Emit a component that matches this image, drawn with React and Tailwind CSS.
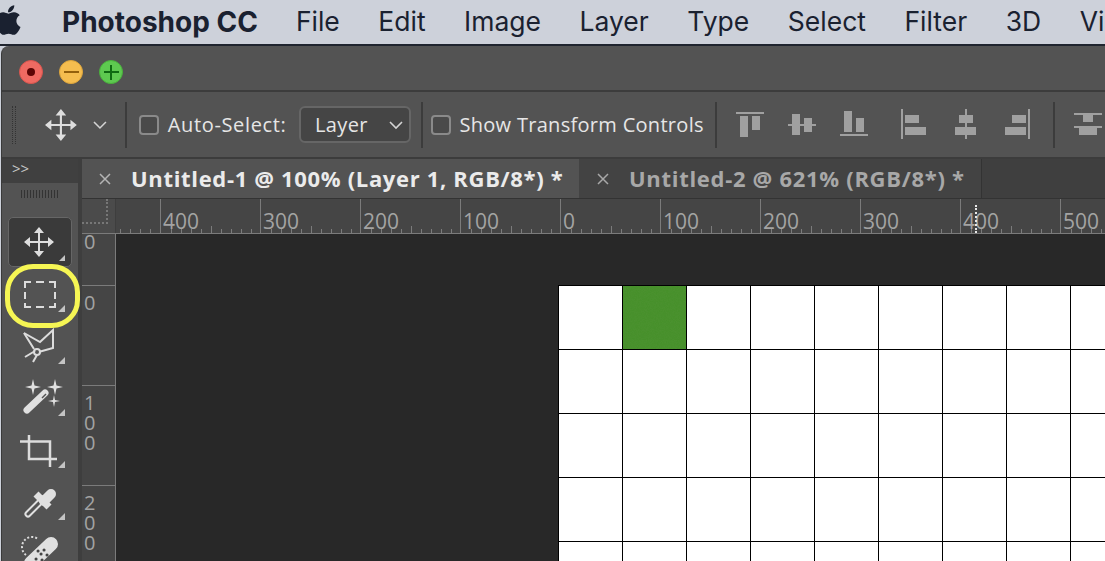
import { FaApple } from "react-icons/fa";

const menus = ["File", "Edit", "Image", "Layer", "Type", "Select", "Filter", "3D", "Vi"];
const hLabels = [400, 300, 200, 100, 0, 100, 200, 300, 400, 500];
const vLabels = [["0"], ["1", "0", "0"], ["2", "0", "0"]];

function Tool({ y, children }) {
  return (
    <svg className="block shrink-0 w-[76px] h-[52px]" viewBox={`2 ${y} 76 52`}>
      {children}
      <polygon points={`58,${y + 45} 65,${y + 45} 65,${y + 38}`} fill="#c4c4c4" />
    </svg>
  );
}

function Check() {
  return <div className="w-[20px] h-[20px] rounded-[4px] border-2 border-[#8a8a8a] bg-[#4a4a4a] shrink-0" />;
}

function Ticks() {
  return (
    <svg className="absolute left-0 bottom-0 w-[100px] h-[8px]" viewBox="0 0 100 8">
      {[10, 20, 30, 40, 50, 60, 70, 80, 90].map((x) => (
        <line key={x} x1={x + 0.5} x2={x + 0.5} y1={x === 50 ? 1 : 4} y2="8" stroke="#7b7b7b" />
      ))}
    </svg>
  );
}

function RulerSegment({ label }) {
  return (
    <div className="relative w-[100px] h-full shrink-0 border-l border-[#7b7b7b] pl-[2px] pt-[9px] text-[21px] leading-[26px] text-[#a3a3a3]">
      {label}
      <Ticks />
    </div>
  );
}

export default function App() {
  return (
    <div className="w-[1105px] h-[561px] overflow-hidden bg-[#cdd1da] flex flex-col font-['Inter',sans-serif]">
      {/* mac menu bar */}
      <div className="relative h-[44px] shrink-0 flex items-center pl-[62px] text-[26.5px] text-[#1a2130] whitespace-nowrap">
        <FaApple className="absolute left-[-8px] top-[3px] w-[32px] h-[34px] text-[#1a2130]" />
        <span className="font-bold text-[28px] mr-[38px]">Photoshop CC</span>
        <div className="flex gap-[38.5px]">
          {menus.map((m) => (
            <span key={m}>{m}</span>
          ))}
        </div>
      </div>
      <div className="h-[2px] shrink-0 bg-[#20252f]" />

      {/* photoshop window */}
      <div className="relative flex-1 min-h-0 ml-[1px] rounded-tl-lg border-l border-[#3a3a3a] bg-[#535353] flex flex-col overflow-hidden font-['Open_Sans',sans-serif]">
        {/* traffic lights */}
        <div className="h-[44px] shrink-0 flex items-center gap-[16px] pl-[17px] pt-[8px]">
          <div className="w-[24px] h-[24px] rounded-full bg-[#ef6a62] border border-[#d8554e] flex items-center justify-center">
            <div className="w-[8px] h-[8px] rounded-full bg-[#5c0505]" />
          </div>
          <div className="w-[24px] h-[24px] rounded-full bg-[#f5bd4f] border border-[#dda53c] flex items-center justify-center">
            <div className="w-[15px] h-[2px] bg-[#93600c]" />
          </div>
          <div className="relative w-[24px] h-[24px] rounded-full bg-[#5ec950] border border-[#49b03c] flex items-center justify-center">
            <div className="w-[15px] h-[2px] bg-[#0f6a12]" />
            <div className="absolute w-[2px] h-[15px] bg-[#0f6a12]" />
          </div>
        </div>
        <div className="h-[2px] shrink-0 bg-[#3c3c3c]" />

        {/* options bar */}
        <div className="h-[65px] shrink-0 flex items-center text-[20px] text-[#e6e6e6] whitespace-nowrap">
          <div className="ml-[10px] w-[4px] h-[38px] border-x border-dotted border-[#333]" />
          <svg className="ml-[29px] w-[32px] h-[32px]" viewBox="0 0 30 30" fill="#dedede">
            <path d="M14 5h2v20h-2zM5 14h20v2H5z" />
            <path d="M15 0l5 6H10zM15 30l-5-6h10zM0 15l6-5v10zM30 15l-6 5V10z" />
          </svg>
          <svg className="ml-[16px] w-[14px] h-[10px]" viewBox="0 0 14 10" fill="none" stroke="#d4d4d4" strokeWidth="1.6">
            <path d="M1 2l6 6 6-6" />
          </svg>
          <div className="ml-[18px] mr-[12px] w-[2px] h-[46px] bg-[#3c3c3c]" />
          <Check />
          <span className="ml-[9px] w-[132px] tracking-[0.65px]">Auto-Select:</span>
          <div className="w-[113px] h-[37px] rounded-[6px] border-2 border-[#666] bg-[#454545] flex items-center justify-between pl-[14px] pr-[6px] tracking-[0.4px]">
            <span>Layer</span>
            <svg className="w-[14px] h-[10px]" viewBox="0 0 14 10" fill="none" stroke="#d4d4d4" strokeWidth="1.6">
              <path d="M1 2l6 6 6-6" />
            </svg>
          </div>
          <div className="ml-[10px] mr-[8px] w-[2px] h-[46px] bg-[#3c3c3c]" />
          <Check />
          <span className="ml-[8px] w-[257px] tracking-[0.3px]">Show Transform Controls</span>
          <div className="w-[2px] h-[46px] bg-[#3c3c3c] shrink-0" />
          <svg className="ml-[12px] w-[320px] h-[46px] shrink-0" viewBox="730 102 320 46" fill="#a0a0a0">
            <path d="M737 112h28v2h-28zM741 116h8v21h-8zM753 116h8v14h-8z" />
            <path d="M789 124h28v2h-28zM793 114h8v21h-8zM805 118h8v14h-8z" />
            <path d="M841 134h28v2h-28zM845 111h8v21h-8zM857 118h8v14h-8z" />
            <path d="M902 109h2v30h-2zM906 115h14v8h-14zM906 127h21v8h-21z" />
            <path d="M966 109h2v30h-2zM960 115h14v8h-14zM956 127h21v8h-21z" />
            <path d="M1029 109h2v30h-2zM1013 115h14v8h-14zM1006 127h21v8h-21z" />
          </svg>
          <div className="ml-[4px] w-[2px] h-[46px] bg-[#3c3c3c] shrink-0" />
          <svg className="w-[50px] h-[46px] shrink-0" viewBox="1056 102 50 46" fill="#a0a0a0">
            <path d="M1075 113h28v2h-28zM1084 115h10v7h-10zM1075 126h28v2h-28zM1080 128h18v7h-18z" />
          </svg>
        </div>
        <div className="h-[2px] shrink-0 bg-[#3c3c3c]" />

        <div className="flex-1 min-h-0 flex">
          {/* tools */}
          <div className="w-[76px] shrink-0 flex flex-col overflow-hidden">
            <div className="h-[24px] shrink-0 bg-[#404040] pl-[10px] text-[15px] leading-[18px] text-[#c8c8c8]">&gt;&gt;</div>
            <div className="h-[34px] shrink-0 flex justify-center pt-[7px] pr-[1px]">
              <div className="w-[38px] h-[8px] bg-[repeating-linear-gradient(90deg,#333_0,#333_1px,transparent_1px,transparent_3px)]" />
            </div>
            <div className="relative ml-[6px] w-[64px] h-[50px] shrink-0 rounded-[5px] border border-[#666] bg-[#3a3a3a] flex items-center justify-center pr-[2px]">
              <svg className="w-[30px] h-[30px]" viewBox="0 0 30 30" fill="#dedede">
                <path d="M14 5h2v20h-2zM5 14h20v2H5z" />
                <path d="M15 0l5 6H10zM15 30l-5-6h10zM0 15l6-5v10zM30 15l-6 5V10z" />
              </svg>
              <div className="absolute right-[6px] bottom-[5px] w-[6px] h-[6px] bg-[#c4c4c4] [clip-path:polygon(100%_0,100%_100%,0_100%)]" />
            </div>
            <Tool y={267}>
              <path
                d="M31 282h-6v6M25 292v7M25 303v4h6M36 307h8M49 307h6v-4M55 299v-7M55 288v-6h-6M44 282h-8"
                fill="none"
                stroke="#dcdcdc"
                strokeWidth="2"
              />
            </Tool>
            <Tool y={319}>
              <path d="M24 333l16 9 13-12v18l-18 5" fill="none" stroke="#dcdcdc" strokeWidth="2" />
              <circle cx="37" cy="352" r="3" fill="#535353" stroke="#dcdcdc" strokeWidth="2" />
              <path d="M25 357l10-6M33 362l4-7M24 333l10 16" stroke="#dcdcdc" strokeWidth="2" />
            </Tool>
            <Tool y={371}>
              <path d="M27 410L45 393" stroke="#e0e0e0" strokeWidth="7" strokeLinecap="round" />
              <path d="M42 398L46 394" stroke="#535353" strokeWidth="1.5" />
              <path
                d="M33 379l1.500 6.500 6.500 1.500-6.500 1.500-1.500 6.500-1.500-6.500-6.500-1.500 6.500-1.500zM55 379l1.500 6.500 6.500 1.500-6.500 1.500-1.500 6.500-1.500-6.500-6.500-1.500 6.500-1.500zM54 395l1 5 5 1-5 1-1 5-1-5-5-1 5-1z"
                fill="#e0e0e0"
              />
            </Tool>
            <Tool y={423}>
              <path d="M20 441.500h30V467M29 435v24h28" fill="none" stroke="#dcdcdc" strokeWidth="2.500" />
            </Tool>
            <Tool y={475}>
              <path d="M28 514l15-15" stroke="#e0e0e0" strokeWidth="7" strokeLinecap="round" />
              <path d="M28 514l15-15" stroke="#535353" strokeWidth="3" strokeLinecap="round" />
              <path d="M36 494l13 13" stroke="#e0e0e0" strokeWidth="7" />
              <path d="M44 501l7-7" stroke="#e0e0e0" strokeWidth="10" strokeLinecap="round" />
            </Tool>
            <Tool y={527}>
              <path d="M26 555a9 9 0 0 1 12-16" fill="none" stroke="#dcdcdc" strokeWidth="2" strokeDasharray="2 2" />
              <path d="M31 563l20-19" stroke="#e0e0e0" strokeWidth="14" strokeLinecap="round" />
              <path d="M36 559h.1M41 554h.1M38 551h.1M44 550h.1M42 560h.1M47 555h.1" stroke="#444" strokeWidth="3" strokeLinecap="round" />
            </Tool>
          </div>
          <div className="w-[4px] shrink-0 bg-[#3e3e3e]" />

          {/* document area */}
          <div className="flex-1 min-w-0 flex flex-col">
            {/* tabs */}
            <div className="h-[40px] shrink-0 flex bg-[#3f3f3f] text-[22px] font-bold whitespace-nowrap border-b border-[#333]">
              <div className="w-[497px] flex items-center bg-[#535353] text-[#ebebeb] tracking-[0.67px]">
                <svg className="ml-[17px] mr-[20px] w-[12px] h-[12px]" viewBox="0 0 12 12" stroke="#b4b4b4" strokeWidth="1.500">
                  <path d="M1 1l10 10M11 1L1 11" />
                </svg>
                Untitled-1 @ 100% (Layer 1, RGB/8*) *
              </div>
              <div className="w-[403px] flex items-center bg-[#434343] text-[#a8a8a8] border-r border-[#333] tracking-[0.7px]">
                <svg className="ml-[18px] mr-[20px] w-[12px] h-[12px]" viewBox="0 0 12 12" stroke="#a8a8a8" strokeWidth="1.500">
                  <path d="M1 1l10 10M11 1L1 11" />
                </svg>
                Untitled-2 @ 621% (RGB/8*) *
              </div>
            </div>

            {/* horizontal ruler */}
            <div className="relative h-[35px] shrink-0 flex bg-[#454545] border-b border-[#7b7b7b] overflow-hidden">
              <div className="relative w-[34px] shrink-0 bg-[#4b4b4b] border-r border-[#3e3e3e]">
                <div className="absolute right-[7px] top-0 bottom-[9px] border-r-2 border-dotted border-[#777]" />
                <div className="absolute left-0 right-[7px] bottom-[9px] border-b-2 border-dotted border-[#777]" />
              </div>
              <div className="relative w-[44px] shrink-0 overflow-hidden">
                <div className="absolute right-0 bottom-0 w-[100px] h-[8px]">
                  <Ticks />
                </div>
              </div>
              {hLabels.map((n, i) => (
                <RulerSegment key={i} label={n} />
              ))}
              {/* cursor position marker */}
              <div className="absolute left-[893px] top-[6px] bottom-0 border-l-2 border-dotted border-[#e8e8e8]" />
            </div>

            <div className="relative flex-1 min-h-0 flex">
              {/* vertical ruler */}
              <div className="w-[34px] shrink-0 bg-[#454545] border-r border-[#7b7b7b] overflow-hidden flex flex-col text-[20px] leading-[20px] text-[#a3a3a3]">
                <div className="h-[51px] shrink-0 pl-[2px] leading-[16px]">0</div>
                {vLabels.map((digits, i) => (
                  <div key={i} className="h-[100px] shrink-0 border-t border-[#7b7b7b] pl-[2px] pt-[7px] flex flex-col">
                    {digits.map((d, j) => (
                      <span key={j}>{d}</span>
                    ))}
                  </div>
                ))}
              </div>

              {/* canvas */}
              <div className="flex-1 min-w-0 bg-[#282828] pl-[442px] pt-[51px] overflow-hidden">
                <div className="grid grid-cols-[repeat(9,64px)] w-[577px] border-l border-t border-black">
                  {Array.from({ length: 45 }).map((_, i) => (
                    <div key={i} className={`h-[64px] border-r border-b border-black ${i === 1 ? "bg-[#46902a]" : "bg-white"}`}>
                      {i === 1 && (
                        <svg className="w-full h-full" viewBox="0 0 63 63">
                          <filter id="grain">
                            <feTurbulence type="fractalNoise" baseFrequency="1.100" numOctaves="2" />
                            <feColorMatrix values="0 0 0 0 0.1  0 0 0 0 0.3  0 0 0 0 0.05  0 0 0 0.9 -0.2" />
                          </filter>
                          <rect width="63" height="63" filter="url(#grain)" opacity="0.55" />
                        </svg>
                      )}
                    </div>
                  ))}
                </div>
              </div>
            </div>
          </div>
        </div>

        {/* highlight ring round the marquee tool */}
        <div className="absolute left-[3px] top-[218px] w-[75px] h-[64px] rounded-[28px] border-[5px] border-[#f6f654]" />
      </div>
    </div>
  );
}
